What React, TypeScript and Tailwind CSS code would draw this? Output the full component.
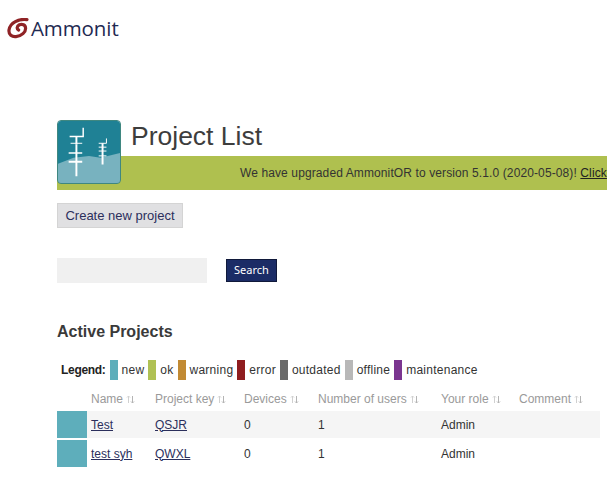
const legend = [
  { label: "new", color: "bg-[#5eaebb]" },
  { label: "ok", color: "bg-[#b0c154]" },
  { label: "warning", color: "bg-[#c18a34]" },
  { label: "error", color: "bg-[#8f1d1f]" },
  { label: "outdated", color: "bg-[#6a6a6a]" },
  { label: "offline", color: "bg-[#b8b8b8]" },
  { label: "maintenance", color: "bg-[#7b3590]" },
];

const columns = ["Name", "Project key", "Devices", "Number of users", "Your role", "Comment"];

const rows = [
  { name: "Test", key: "QSJR", devices: "0", users: "1", role: "Admin" },
  { name: "test syh", key: "QWXL", devices: "0", users: "1", role: "Admin" },
];

function SortIcon() {
  return (
    <svg width="9" height="9" viewBox="0 0 9 9" className="ml-[3px] inline-block" fill="none" stroke="#d0d0d0" strokeWidth="1">
      <path d="M2.5 8V1M1 2.5 2.5 1 4 2.5" />
      <path d="M6.5 1v7M5 6.5 6.5 8 8 6.5" stroke="#b4b4b4" />
    </svg>
  );
}

function Logo() {
  return (
    <div className="flex h-[24px] w-[114px] items-center">
      <svg width="22" height="21" viewBox="0 0 22 21" fill="none" className="shrink-0" stroke="#8f2326" strokeLinecap="round">
        <path d="M20 1.6C12 .6 3 4.4 2 12 1.4 16.8 5 19 9 18.6 14.8 18 18.6 14 18.6 10.4 18.6 6.8 15 5.6 12.4 6.8 9.6 8.2 9.6 11 11.6 12" strokeWidth="3.2" />
      </svg>
      <span className="ml-[2px] font-['Open_Sans',sans-serif] text-[20.5px] leading-none font-medium tracking-[-0.1px] whitespace-nowrap text-[#1f2a52]">
        Ammonit
      </span>
    </div>
  );
}

function ProjectIcon() {
  return (
    <svg
      width="64"
      height="64"
      viewBox="0 0 64 64"
      className="absolute top-0 left-0 rounded-[4px] border border-[#3f8780]"
    >
      <rect width="64" height="64" fill="#1f8195" />
      <path d="M0 44 16 38 32 36 44 38 64 33V64H0Z" fill="#78b2bf" />
      <g stroke="#ffffff" fill="none">
        <path d="M19 24V57" strokeWidth="2" />
        <path d="M12 16H26V7" strokeWidth="1.5" />
        <path d="M13 23H25" strokeWidth="1" />
        <path d="M11 33H25" strokeWidth="1.5" />
        <path d="M11 42H25" strokeWidth="2" />
        <path d="M19 16V24" strokeWidth="2" />
        <path d="M46 23V45" strokeWidth="2" />
        <path d="M42 23H50V18" strokeWidth="1" />
        <path d="M42 27H50M42 31H50M42 36H50" strokeWidth="1" />
      </g>
    </svg>
  );
}

export default function App() {
  return (
    <div className="h-[484px] w-[607px] overflow-hidden bg-white font-['Liberation_Sans',Arial,sans-serif] text-[12px] text-[#333]">
      <div className="pt-[16px] pl-[7px]">
        <Logo />
      </div>

      <div className="relative mt-[80px] ml-[57px]">
        <ProjectIcon />
        <h1 className="h-[36px] pt-[1px] pl-[74px] text-[26.5px] leading-[31px] font-normal text-[#3d3d3d]">Project List</h1>
        <div className="flex h-[34px] items-center overflow-hidden bg-[#afc04f] pl-[183px] tracking-[0.11px] whitespace-nowrap text-[#333]">
          <span>We have upgraded AmmonitOR to version 5.1.0 (2020-05-08)!&nbsp;</span>
          <a className="text-[#222] underline">Click</a>
        </div>
      </div>

      <div className="mt-[13px] ml-[57px]">
        <button className="h-[25px] w-[126px] border border-[#d4d4d4] bg-[#e0e0e2] text-[13px] text-[#2b2f5c]">
          Create new project
        </button>
      </div>

      <div className="mt-[30px] ml-[57px] flex items-center gap-[19px]">
        <input className="h-[25px] w-[150px] bg-[#f0f0f0] outline-none" />
        <button className="h-[23px] w-[51px] border border-[#10193a] bg-[#1b2c66] font-['Noto_Sans',sans-serif] text-[11px] text-white">
          Search
        </button>
      </div>

      <h2 className="mt-[39px] ml-[57px] text-[16px] leading-[20px] font-bold text-[#3a3a3a]">Active Projects</h2>

      <div className="mt-[18px] ml-[61px] flex h-[20px] items-center text-[#333]">
        <strong className="mr-[4px] tracking-[-0.3px] text-[#222]">Legend:</strong>
        {legend.map((item) => (
          <div key={item.label} className="flex items-center">
            <span className={`h-[20px] w-[8px] ${item.color}`} />
            <span className="mx-[4px] tracking-[0.25px]">{item.label}</span>
          </div>
        ))}
      </div>

      <table className="mt-[7px] ml-[57px] w-[543px] table-fixed border-separate border-spacing-x-0 border-spacing-y-[2px] text-left">
        <colgroup>
          <col className="w-[34px]" />
          <col className="w-[64px]" />
          <col className="w-[89px]" />
          <col className="w-[74px]" />
          <col className="w-[123px]" />
          <col className="w-[78px]" />
          <col className="w-[81px]" />
        </colgroup>
        <thead>
          <tr className="h-[20px]">
            <th />
            {columns.map((c) => (
              <th key={c} className="whitespace-nowrap font-normal text-[#9a9a9a]">
                {c}
                <SortIcon />
              </th>
            ))}
          </tr>
        </thead>
        <tbody>
          {rows.map((r, i) => (
            <tr key={r.key} className={i === 0 ? "h-[27px] bg-[#f5f5f5]" : "h-[27px]"}>
              <td className="p-0 align-top">
                <div className="h-[27px] w-[30px] bg-[#5eaebb]" />
              </td>
              <td><a className="text-[#2b2f5c] underline">{r.name}</a></td>
              <td><a className="text-[#2b2f5c] underline">{r.key}</a></td>
              <td>{r.devices}</td>
              <td>{r.users}</td>
              <td>{r.role}</td>
              <td />
            </tr>
          ))}
        </tbody>
      </table>
    </div>
  );
}
